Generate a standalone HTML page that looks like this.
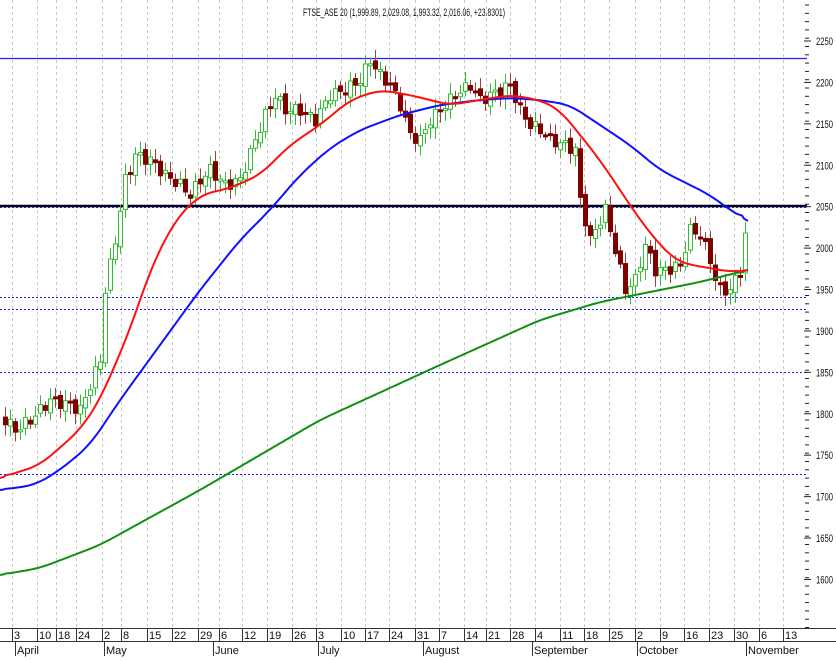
<!DOCTYPE html>
<html><head><meta charset="utf-8">
<style>
html,body{margin:0;padding:0;background:#fff;}
body{width:836px;height:660px;overflow:hidden;position:relative;font-family:"Liberation Sans",sans-serif;}
svg{position:absolute;left:0;top:0;}
svg text{font-family:"Liberation Sans Narrow","Liberation Sans",sans-serif;font-size:11px;fill:#111;}
</style></head><body>
<svg id="c" width="836" height="660" viewBox="0 0 836 660" xmlns="http://www.w3.org/2000/svg">
<g id="grid" stroke="#c8c8c8" stroke-dasharray="3,3" stroke-width="1"></g>
<line x1="0" y1="58.5" x2="807" y2="58.5" stroke="#2020ff" stroke-width="1.3"/>
<line x1="0" y1="297.5" x2="807" y2="297.5" stroke="#2020ff" stroke-width="1" stroke-dasharray="2,2"/>
<line x1="0" y1="309.5" x2="807" y2="309.5" stroke="#2020ff" stroke-width="1" stroke-dasharray="2,2"/>
<line x1="0" y1="372.5" x2="807" y2="372.5" stroke="#2020ff" stroke-width="1" stroke-dasharray="2,2"/>
<line x1="0" y1="474.5" x2="807" y2="474.5" stroke="#2020ff" stroke-width="1" stroke-dasharray="2,2"/>
<line x1="0" y1="206" x2="807" y2="206" stroke="#000" stroke-width="2.5"/>
<line x1="0" y1="207.5" x2="807" y2="207.5" stroke="#2020ff" stroke-width="1" stroke-dasharray="2,2"/>
<g id="candles"></g>
<path id="green" fill="none" stroke="#109010" stroke-width="2"/>
<path id="blue" fill="none" stroke="#1010ff" stroke-width="2"/>
<path id="red" fill="none" stroke="#ff1010" stroke-width="2"/>
<text x="303" y="16" textLength="202" lengthAdjust="spacingAndGlyphs" style="font-size:11px">FTSE_ASE 20 (1,999.89, 2,029.08, 1,993.32, 2,016.06, +23.8301)</text>
<g id="axis"></g>
<line x1="0" y1="628.5" x2="836" y2="628.5" stroke="#333"/>
<line x1="0" y1="641.5" x2="836" y2="641.5" stroke="#333"/>
<g id="yl"></g>
<g id="xl"></g>
<g>
<line x1="15.5" y1="641" x2="15.5" y2="656" stroke="#333"/><text x="17" y="654">April</text>
<line x1="104.5" y1="641" x2="104.5" y2="656" stroke="#333"/><text x="106" y="654">May</text>
<line x1="213.5" y1="641" x2="213.5" y2="656" stroke="#333"/><text x="215" y="654">June</text>
<line x1="318.5" y1="641" x2="318.5" y2="656" stroke="#333"/><text x="320" y="654">July</text>
<line x1="423.5" y1="641" x2="423.5" y2="656" stroke="#333"/><text x="425" y="654">August</text>
<line x1="532.5" y1="641" x2="532.5" y2="656" stroke="#333"/><text x="534" y="654">September</text>
<line x1="637.5" y1="641" x2="637.5" y2="656" stroke="#333"/><text x="639" y="654">October</text>
<line x1="746.5" y1="641" x2="746.5" y2="656" stroke="#333"/><text x="748" y="654">November</text>
</g>
</svg>
<script>
(function(){
var NS="http://www.w3.org/2000/svg";
function el(p,t,a){var e=document.createElementNS(NS,t);for(var k in a)e.setAttribute(k,a[k]);p.appendChild(e);return e;}
var yl=document.getElementById("yl");
var labs=["2250","2200","2150","2100","2050","2000","1950","1900","1850","1800","1750","1700","1650","1600"];
labs.forEach(function(l,i){var t=el(yl,"text",{x:816,y:(45+i*41.42).toFixed(1),textLength:17,lengthAdjust:"spacingAndGlyphs"});t.textContent=l;});
var wk=[[15,"3"],[40,"10"],[59,"18"],[79,"24"],[105,"2"],[124,"8"],[150,"15"],[175,"22"],[201,"29"],[222,"6"],[245,"12"],[270,"19"],[295,"26"],[319,"3"],[344,"10"],[368,"17"],[392,"24"],[418,"31"],[442,"7"],[467,"14"],[489,"21"],[513,"28"],[538,"4"],[563,"11"],[587,"18"],[612,"25"],[638,"2"],[663,"9"],[687,"16"],[712,"23"],[737,"30"],[762,"6"],[786,"13"]];
var g=document.getElementById("grid"),xl=document.getElementById("xl");
wk.forEach(function(w){
 el(g,"line",{x1:w[0]-2.5,y1:0,x2:w[0]-2.5,y2:628});
 el(xl,"line",{x1:w[0]-2.5,y1:628,x2:w[0]-2.5,y2:641,stroke:"#333"});
 var t=el(xl,"text",{x:w[0]-1,y:639});t.textContent=w[1];
});
var ax=document.getElementById("axis");
for(var y=5;y<628;y+=8.3){el(ax,"line",{x1:805,y1:y,x2:809,y2:y,stroke:"#222"});}
for(var y=41;y<600;y+=41.42){el(ax,"line",{x1:804,y1:y,x2:811,y2:y,stroke:"#222"});}
function interp(pts,x){for(var i=0;i<pts.length-1;i++){if(x>=pts[i][0]&&x<=pts[i+1][0]){var t=(x-pts[i][0])/(pts[i+1][0]-pts[i][0]);return pts[i][1]+t*(pts[i+1][1]-pts[i][1]);}}return pts[pts.length-1][1];}
function smooth(pts,id){
 var xs=[],ys=[];for(var x=0;x<=748;x+=2){xs.push(x);ys.push(interp(pts,x));}
 var d="";for(var i=0;i<xs.length;i++){var s=0,n=0;for(var j=-6;j<=6;j++){var k=i+j;if(k>=0&&k<ys.length){s+=ys[k];n++;}}var v=(i<3||i>ys.length-4)?ys[i]:s/n;d+=(i?"L":"M")+xs[i]+" "+v.toFixed(1);}
 document.getElementById(id).setAttribute("d",d);}
smooth([[0,478],[40,465],[80,430],[100,400],[130,330],[150,270],[175,220],[200,195],[230,188],[260,175],[290,145],[320,125],[350,100],[380,90],[410,95],[450,105],[480,100],[510,95],[540,100],[560,110],[580,135],[600,160],[620,190],[640,220],[660,245],[675,260],[690,265],[710,268],[730,272],[748,270]],"red");
smooth([[0,490],[35,485],[60,470],[90,445],[120,400],[160,345],[200,290],[240,240],[270,210],[300,175],[330,148],[360,130],[400,115],[440,105],[480,100],[510,98],[540,100],[570,105],[600,125],[630,145],[660,170],[690,185],[710,195],[730,210],[748,221]],"blue");
smooth([[0,575],[40,568],[100,545],[200,490],[320,420],[440,365],[540,320],[600,302],[700,282],[748,270]],"green");
var P=[[5,420],[15,430],[30,420],[50,400],[70,405],[80,410],[100,360],[105,290],[115,240],[125,180],[135,155],[150,160],[165,175],[180,185],[190,195],[200,180],[210,170],[225,185],[240,180],[255,140],[265,115],[275,95],[285,110],[300,110],[315,120],[330,95],[345,90],[360,80],[370,60],[380,75],[390,85],[400,105],[410,135],[420,140],[430,120],[445,105],[455,95],[470,85],[480,100],[490,95],[500,90],[510,85],[520,110],[530,125],[540,130],[550,140],[565,145],[575,150],[580,200],[590,240],[600,220],[605,210],[615,250],[625,290],[635,280],[645,245],[655,270],[665,270],[680,265],[690,230],[700,235],[710,260],[718,290],[730,290],[740,270],[748,215]];
var cg=document.getElementById("candles");var prev=interp(P,5);
for(var x=5;x<=748;x+=5){
 var c=interp(P,x)+Math.sin(x*1.7)*6;var o=prev+Math.sin(x*0.9)*3;
 var up=c<o;var bt=Math.min(o,c),bb=Math.max(o,c);if(bb-bt<2)bb=bt+2;
 var hi=bt-3-Math.abs(Math.sin(x*2.3))*8,lo=bb+3+Math.abs(Math.cos(x*1.3))*8;
 var col=up?"#33bb33":"#800000";
 el(cg,"line",{x1:x+.5,y1:hi,x2:x+.5,y2:lo,stroke:up?"#33bb33":"#a04040"});
 el(cg,"rect",{x:x-1.5,y:bt,width:4,height:bb-bt,fill:up?"#fff":"#800000",stroke:col,"stroke-width":1});
 prev=c;
}
})();
</script>
</body></html>
